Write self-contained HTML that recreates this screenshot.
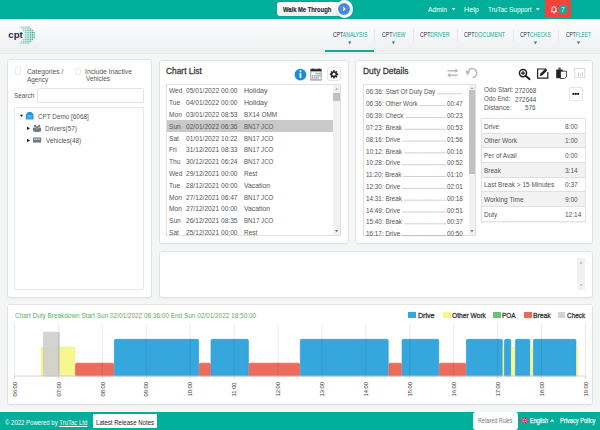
<!DOCTYPE html><html><head><meta charset="utf-8"><style>
html,body{margin:0;padding:0;width:600px;height:430px;overflow:hidden;position:relative;font-family:"Liberation Sans", sans-serif}
.t{position:absolute;white-space:nowrap;line-height:1}
svg{overflow:visible}
</style></head><body>
<div style="position:absolute;left:0.00px;top:0.00px;width:600.00px;height:19.00px;background:#00af9a"></div>
<div style="position:absolute;left:277.00px;top:2.00px;width:63.00px;height:14.30px;background:linear-gradient(#fff,#ededed);border-radius:3px;box-shadow:0 0 1px rgba(0,0,0,.3)"></div>
<div class="t" style="left:283.00px;top:6.50px;font-size:6.6px;color:#2a2a2a;font-weight:bold;transform:scaleX(0.8837);transform-origin:0 0;-webkit-text-stroke:.15px #2a2a2a">Walk Me Through</div>
<div style="position:absolute;left:335.5px;top:0.15px;width:17.5px;height:17.5px;border-radius:50%;background:#fdfdfd;box-shadow:0 0 1px rgba(0,0,0,.25)"></div>
<div style="position:absolute;left:337.9px;top:2.9px;width:12px;height:12px;border-radius:50%;background:#4a8bd9"></div>
<svg style="position:absolute;left:0;top:0" width="600" height="20"><path d="M343 7.3 L344.9 8.9 L343 10.5" stroke="#fff" stroke-width="1.2" fill="none"/></svg>
<div class="t" style="left:428.30px;top:5.65px;font-size:7.3px;color:#fff;font-weight:normal;transform:scaleX(0.9215);transform-origin:0 0;">Admin</div>
<svg style="position:absolute;left:0;top:0" width="600" height="20"><path d="M451.8 8 L455.4 8 L453.6 10.5Z" fill="#fff"/><path d="M536 8 L539.6 8 L537.8 10.5Z" fill="#fff"/></svg>
<div class="t" style="left:464.12px;top:5.65px;font-size:7.3px;color:#fff;font-weight:normal;transform:scaleX(0.9886);transform-origin:0 0;">Help</div>
<div class="t" style="left:488.17px;top:5.65px;font-size:7.3px;color:#fff;font-weight:normal;transform:scaleX(0.8769);transform-origin:0 0;">TruTac Support</div>
<div style="position:absolute;left:544.60px;top:0.00px;width:26.90px;height:18.30px;background:#f2443b"></div>
<svg style="position:absolute;left:0;top:0" width="600" height="20"><path d="M551 11.6 h6 M551.9 11.4 v-2.6 a2.1 2.1 0 0 1 4.2 0 v2.6" stroke="#fff" stroke-width="1" fill="none"/><circle cx="554" cy="12.7" r=".85" fill="#fff"/><circle cx="554" cy="6.3" r=".5" fill="#fff"/></svg>
<div style="position:absolute;left:559.20px;top:5.00px;width:7.80px;height:8.70px;background:#14ab98;border-radius:1.5px"></div>
<div class="t" style="left:561.30px;top:6.52px;font-size:7.15px;color:#e8f7f4;font-weight:normal;transform:scaleX(0.9091);transform-origin:0 0;">7</div>
<div style="position:absolute;left:0.00px;top:19.00px;width:600.00px;height:33.50px;background:linear-gradient(#fdfdfd,#eef0f1)"></div>
<div style="position:absolute;left:0.00px;top:52.50px;width:600.00px;height:1.00px;background:#e9ebeb"></div>
<svg style="position:absolute;left:0;top:0" width="60" height="53"><rect x="19.46" y="26.60" width="1.2" height="1.2" fill="#22a995" opacity="0.40"/><rect x="19.46" y="42.44" width="1.2" height="1.2" fill="#22a995" opacity="0.40"/><rect x="21.22" y="26.60" width="1.2" height="1.2" fill="#22a995" opacity="0.48"/><rect x="21.22" y="28.36" width="1.2" height="1.2" fill="#22a995" opacity="0.48"/><rect x="21.22" y="40.68" width="1.2" height="1.2" fill="#22a995" opacity="0.48"/><rect x="21.22" y="42.44" width="1.2" height="1.2" fill="#22a995" opacity="0.48"/><rect x="22.98" y="26.60" width="1.2" height="1.2" fill="#22a995" opacity="0.56"/><rect x="22.98" y="28.36" width="1.2" height="1.2" fill="#22a995" opacity="0.56"/><rect x="22.98" y="30.12" width="1.2" height="1.2" fill="#22a995" opacity="0.56"/><rect x="22.98" y="38.92" width="1.2" height="1.2" fill="#22a995" opacity="0.56"/><rect x="22.98" y="40.68" width="1.2" height="1.2" fill="#22a995" opacity="0.56"/><rect x="22.98" y="42.44" width="1.2" height="1.2" fill="#22a995" opacity="0.56"/><rect x="24.74" y="26.60" width="1.2" height="1.2" fill="#22a995" opacity="0.64"/><rect x="24.74" y="28.36" width="1.2" height="1.2" fill="#22a995" opacity="0.64"/><rect x="24.74" y="30.12" width="1.2" height="1.2" fill="#22a995" opacity="0.64"/><rect x="24.74" y="31.88" width="1.2" height="1.2" fill="#22a995" opacity="0.64"/><rect x="24.74" y="33.64" width="1.2" height="1.2" fill="#22a995" opacity="0.64"/><rect x="24.74" y="35.40" width="1.2" height="1.2" fill="#22a995" opacity="0.64"/><rect x="24.74" y="37.16" width="1.2" height="1.2" fill="#22a995" opacity="0.64"/><rect x="24.74" y="38.92" width="1.2" height="1.2" fill="#22a995" opacity="0.64"/><rect x="24.74" y="40.68" width="1.2" height="1.2" fill="#22a995" opacity="0.64"/><rect x="24.74" y="42.44" width="1.2" height="1.2" fill="#22a995" opacity="0.64"/><rect x="26.50" y="26.60" width="1.2" height="1.2" fill="#22a995" opacity="0.72"/><rect x="26.50" y="28.36" width="1.2" height="1.2" fill="#22a995" opacity="0.72"/><rect x="26.50" y="30.12" width="1.2" height="1.2" fill="#22a995" opacity="0.72"/><rect x="26.50" y="31.88" width="1.2" height="1.2" fill="#22a995" opacity="0.72"/><rect x="26.50" y="33.64" width="1.2" height="1.2" fill="#22a995" opacity="0.72"/><rect x="26.50" y="35.40" width="1.2" height="1.2" fill="#22a995" opacity="0.72"/><rect x="26.50" y="37.16" width="1.2" height="1.2" fill="#22a995" opacity="0.72"/><rect x="26.50" y="38.92" width="1.2" height="1.2" fill="#22a995" opacity="0.72"/><rect x="26.50" y="40.68" width="1.2" height="1.2" fill="#22a995" opacity="0.72"/><rect x="26.50" y="42.44" width="1.2" height="1.2" fill="#22a995" opacity="0.72"/><rect x="28.26" y="26.60" width="1.2" height="1.2" fill="#22a995" opacity="0.81"/><rect x="28.26" y="28.36" width="1.2" height="1.2" fill="#22a995" opacity="0.81"/><rect x="28.26" y="30.12" width="1.2" height="1.2" fill="#22a995" opacity="0.81"/><rect x="28.26" y="31.88" width="1.2" height="1.2" fill="#22a995" opacity="0.81"/><rect x="28.26" y="33.64" width="1.2" height="1.2" fill="#22a995" opacity="0.81"/><rect x="28.26" y="35.40" width="1.2" height="1.2" fill="#22a995" opacity="0.81"/><rect x="28.26" y="37.16" width="1.2" height="1.2" fill="#22a995" opacity="0.81"/><rect x="28.26" y="38.92" width="1.2" height="1.2" fill="#22a995" opacity="0.81"/><rect x="28.26" y="40.68" width="1.2" height="1.2" fill="#22a995" opacity="0.81"/><rect x="28.26" y="42.44" width="1.2" height="1.2" fill="#22a995" opacity="0.81"/><rect x="30.02" y="28.36" width="1.2" height="1.2" fill="#22a995" opacity="0.89"/><rect x="30.02" y="30.12" width="1.2" height="1.2" fill="#22a995" opacity="0.89"/><rect x="30.02" y="31.88" width="1.2" height="1.2" fill="#22a995" opacity="0.89"/><rect x="30.02" y="33.64" width="1.2" height="1.2" fill="#22a995" opacity="0.89"/><rect x="30.02" y="35.40" width="1.2" height="1.2" fill="#22a995" opacity="0.89"/><rect x="30.02" y="37.16" width="1.2" height="1.2" fill="#22a995" opacity="0.89"/><rect x="30.02" y="38.92" width="1.2" height="1.2" fill="#22a995" opacity="0.89"/><rect x="30.02" y="40.68" width="1.2" height="1.2" fill="#22a995" opacity="0.89"/><rect x="31.78" y="30.12" width="1.2" height="1.2" fill="#22a995" opacity="0.97"/><rect x="31.78" y="31.88" width="1.2" height="1.2" fill="#22a995" opacity="0.97"/><rect x="31.78" y="33.64" width="1.2" height="1.2" fill="#22a995" opacity="0.97"/><rect x="31.78" y="35.40" width="1.2" height="1.2" fill="#22a995" opacity="0.97"/><rect x="31.78" y="37.16" width="1.2" height="1.2" fill="#22a995" opacity="0.97"/><rect x="31.78" y="38.92" width="1.2" height="1.2" fill="#22a995" opacity="0.97"/><rect x="33.54" y="31.88" width="1.2" height="1.2" fill="#22a995" opacity="1.00"/><rect x="33.54" y="33.64" width="1.2" height="1.2" fill="#22a995" opacity="1.00"/><rect x="33.54" y="35.40" width="1.2" height="1.2" fill="#22a995" opacity="1.00"/><rect x="33.54" y="37.16" width="1.2" height="1.2" fill="#22a995" opacity="1.00"/>
<text x="8.3" y="37.7" font-family="Liberation Sans" font-weight="bold" font-size="9.6" fill="#2b2650" letter-spacing="0">cpt</text>
</svg>
<div class="t" style="left:332.55px;top:31.65px;font-size:6.3px;color:#17a99a;font-weight:normal;transform:scaleX(0.8080);transform-origin:0 0;"><span style="color:#2e2d4d">CPT</span>ANALYSIS</div>
<svg style="position:absolute;left:0;top:0" width="600" height="50"><path d="M348.1 41.6 L351.4 41.6 L349.8 44.2Z" fill="#1b7ed0"/></svg>
<div class="t" style="left:381.54px;top:31.65px;font-size:6.3px;color:#17a99a;font-weight:normal;transform:scaleX(0.8183);transform-origin:0 0;"><span style="color:#2e2d4d">CPT</span>VIEW</div>
<svg style="position:absolute;left:0;top:0" width="600" height="50"><path d="M391.7 41.6 L395.1 41.6 L393.4 44.2Z" fill="#1b7ed0"/></svg>
<div class="t" style="left:420.04px;top:31.65px;font-size:6.3px;color:#17a99a;font-weight:normal;transform:scaleX(0.8146);transform-origin:0 0;"><span style="color:#2e2d4d">CPT</span>DRIVER</div>
<div class="t" style="left:463.94px;top:31.65px;font-size:6.3px;color:#17a99a;font-weight:normal;transform:scaleX(0.8359);transform-origin:0 0;"><span style="color:#2e2d4d">CPT</span>DOCUMENT</div>
<div class="t" style="left:519.95px;top:31.65px;font-size:6.3px;color:#17a99a;font-weight:normal;transform:scaleX(0.7910);transform-origin:0 0;"><span style="color:#2e2d4d">CPT</span>CHECKS</div>
<svg style="position:absolute;left:0;top:0" width="600" height="50"><path d="M533.6 41.6 L537.1 41.6 L535.4 44.2Z" fill="#1b7ed0"/></svg>
<div class="t" style="left:565.96px;top:31.65px;font-size:6.3px;color:#17a99a;font-weight:normal;transform:scaleX(0.7716);transform-origin:0 0;"><span style="color:#2e2d4d">CPT</span>FLEET</div>
<svg style="position:absolute;left:0;top:0" width="600" height="50"><path d="M576.8 41.6 L580.2 41.6 L578.5 44.2Z" fill="#1b7ed0"/></svg>
<div style="position:absolute;left:374.00px;top:29.00px;width:0.80px;height:13.00px;background:#e9ebeb"></div>
<div style="position:absolute;left:413.30px;top:29.00px;width:0.80px;height:13.00px;background:#e9ebeb"></div>
<div style="position:absolute;left:457.00px;top:29.00px;width:0.80px;height:13.00px;background:#e9ebeb"></div>
<div style="position:absolute;left:513.20px;top:29.00px;width:0.80px;height:13.00px;background:#e9ebeb"></div>
<div style="position:absolute;left:558.00px;top:29.00px;width:0.80px;height:13.00px;background:#e9ebeb"></div>
<div style="position:absolute;left:325.00px;top:50.30px;width:49.00px;height:1.50px;background:#17a99a"></div>
<style>body{background:#f4f6f5}</style>
<div style="position:absolute;left:7.00px;top:59.00px;width:145.00px;height:238.50px;background:#fff;border:1px solid #e2e3e3;border-radius:3px;box-sizing:border-box;box-shadow:0 1px 1px rgba(0,0,0,.03)"></div>
<div style="position:absolute;left:14.60px;top:67.40px;width:6.00px;height:7.40px;border:1px solid #ebebeb;border-radius:1px;box-sizing:border-box;background:#fff"></div>
<div class="t" style="left:26.86px;top:68.29px;font-size:7.42px;color:#555;font-weight:normal;transform:scaleX(0.9091);transform-origin:0 0;">Categories /</div>
<div class="t" style="left:27.20px;top:75.90px;font-size:7.01px;color:#555;font-weight:normal;transform:scaleX(0.9091);transform-origin:0 0;">Agency</div>
<div style="position:absolute;left:75.00px;top:67.50px;width:5.70px;height:7.20px;border:1px solid #ebebeb;border-radius:1px;box-sizing:border-box;background:#fff"></div>
<div class="t" style="left:85.19px;top:68.08px;font-size:7.45px;color:#555;font-weight:normal;transform:scaleX(0.9091);transform-origin:0 0;">Include Inactive</div>
<div class="t" style="left:85.80px;top:75.47px;font-size:7.07px;color:#555;font-weight:normal;transform:scaleX(0.9091);transform-origin:0 0;">Vehicles</div>
<div class="t" style="left:14.34px;top:91.89px;font-size:7.02px;color:#555;font-weight:normal;transform:scaleX(0.9091);transform-origin:0 0;">Search</div>
<div style="position:absolute;left:37.00px;top:88.00px;width:107.00px;height:14.50px;border:1px solid #e2e2e2;border-radius:2px;box-sizing:border-box;background:#fff"></div>
<div style="position:absolute;left:14.00px;top:107.00px;width:130.00px;height:183.00px;border:1px solid #e8e8e8;border-radius:2px;box-sizing:border-box;background:#fff"></div>
<svg style="position:absolute;left:0;top:0" width="160" height="160">
<path d="M19.8 114.8 L23.2 114.8 L21.5 117.1Z" fill="#222"/>
<path d="M27 126.7 L30.1 128.35 L27 130Z" fill="#222"/>
<path d="M27 138.8 L30.1 140.5 L27 142.2Z" fill="#222"/>
<path d="M25.9 119.4 V114.6 L28.1 112.1 H31.3 L33.5 114.6 V119.4Z" fill="#1f95de"/>
<g stroke="#8ccbf2" stroke-width=".55"><path d="M27.1 115.4 H32.3 M27.1 116.7 H32.3 M27.1 118 H32.3"/></g>
<g fill="#6b7a84"><circle cx="35" cy="126" r="1.15"/><circle cx="39.2" cy="126" r="1.15"/><circle cx="37.1" cy="127.3" r="1.3"/>
<path d="M33 131.5 V128.6 Q33 127.6 34 127.6 H35.6 L36 128.4 H38.2 L38.6 127.6 H40.2 Q41.2 127.6 41.2 128.6 V131.5Z"/>
<rect x="34.9" y="128.8" width="4.4" height="3.1" rx=".6"/></g>
<rect x="33" y="137.6" width="8.2" height="4.8" rx=".7" fill="#6b7a84"/>
<g fill="#cfd8de"><rect x="34" y="138.5" width="1.5" height="1.5"/><rect x="36.1" y="138.5" width="1.5" height="1.5"/><rect x="38.2" y="138.5" width="1.5" height="1.5"/></g>
<rect x="33.3" y="142.4" width="7.6" height=".6" fill="#9aa5ac"/>
</svg>
<div class="t" style="left:37.68px;top:113.20px;font-size:6.99px;color:#555;font-weight:normal;transform:scaleX(0.9091);transform-origin:0 0;">CPT Demo [6068]</div>
<div class="t" style="left:45.28px;top:125.73px;font-size:7.14px;color:#555;font-weight:normal;transform:scaleX(0.9091);transform-origin:0 0;">Drivers(57)</div>
<div class="t" style="left:45.80px;top:137.47px;font-size:7.06px;color:#555;font-weight:normal;transform:scaleX(0.9091);transform-origin:0 0;">Vehicles(48)</div>
<div style="position:absolute;left:159.00px;top:60.00px;width:190.00px;height:184.00px;background:#fff;border:1px solid #e2e3e3;border-radius:3px;box-sizing:border-box;box-shadow:0 1px 1px rgba(0,0,0,.03)"></div>
<div class="t" style="left:166.28px;top:67.49px;font-size:9.21px;color:#3a3a3a;font-weight:normal;transform:scaleX(0.9091);transform-origin:0 0;-webkit-text-stroke:.3px #3a3a3a">Chart List</div>
<svg style="position:absolute;left:0;top:0" width="600" height="100">
<circle cx="300.45" cy="74.55" r="5.9" fill="#1a8cd8"/>
<circle cx="300.45" cy="71.3" r="0.95" fill="#fff"/>
<rect x="299.6" y="73.1" width="1.7" height="5" rx=".4" fill="#fff"/>
<rect x="310.8" y="69" width="10.4" height="11" fill="#fff" stroke="#8a8a8a" stroke-width=".8"/>
<rect x="310.6" y="69.2" width="10.8" height="2.3" fill="#1e1e1e"/>
<rect x="312.2" y="68.6" width="1.2" height="1" fill="#1e1e1e"/><rect x="318.6" y="68.6" width="1.2" height="1" fill="#1e1e1e"/>
<rect x="310.8" y="71.5" width="10.4" height=".9" fill="#cfcfcf"/>
<rect x="315.5" y="72.9" width="1.3" height="1.6" fill="#8fa3b8"/><rect x="317.4" y="72.9" width="1.3" height="1.6" fill="#b59d8f"/><rect x="319.3" y="72.9" width="1.3" height="1.6" fill="#7f93a8"/><rect x="311.7" y="75.0" width="1.3" height="1.6" fill="#c7a08a"/><rect x="313.6" y="75.0" width="1.3" height="1.6" fill="#8fa3b8"/><rect x="315.5" y="75.0" width="1.3" height="1.6" fill="#b59d8f"/><rect x="317.4" y="75.0" width="1.3" height="1.6" fill="#7f93a8"/><rect x="319.3" y="75.0" width="1.3" height="1.6" fill="#8a9fb5"/><rect x="311.7" y="77.1" width="1.3" height="1.6" fill="#8fa3b8"/><rect x="313.6" y="77.1" width="1.3" height="1.6" fill="#b59d8f"/><rect x="315.5" y="77.1" width="1.3" height="1.6" fill="#7f93a8"/><rect x="317.4" y="77.1" width="1.3" height="1.6" fill="#8a9fb5"/>
<rect x="310.8" y="79.2" width="10.4" height="1.1" fill="#b0b0b0"/>
</svg>
<div style="position:absolute;left:327.20px;top:67.20px;width:13.70px;height:14.20px;border:1px solid #e6e6e6;border-radius:2.5px;box-sizing:border-box;background:#fff;box-shadow:0 0 1px rgba(0,0,0,.08)"></div>
<svg style="position:absolute;left:0;top:0" width="600" height="100"><polygon points="336.87,73.60 338.04,73.61 338.04,74.99 336.87,75.00 336.52,75.83 337.35,76.67 336.37,77.65 335.53,76.82 334.70,77.17 334.69,78.34 333.31,78.34 333.30,77.17 332.47,76.82 331.63,77.65 330.65,76.67 331.48,75.83 331.13,75.00 329.96,74.99 329.96,73.61 331.13,73.60 331.48,72.77 330.65,71.93 331.63,70.95 332.47,71.78 333.30,71.43 333.31,70.26 334.69,70.26 334.70,71.43 335.53,71.78 336.37,70.95 337.35,71.93 336.52,72.77" fill="#222" stroke="#222" stroke-width=".3" stroke-linejoin="round"/><circle cx="334" cy="74.3" r="1.45" fill="#fff"/></svg>
<div style="position:absolute;left:166.00px;top:84.00px;width:175.00px;height:152.00px;border:1px solid #e0e0e0;box-sizing:border-box;background:#fff"></div>
<div style="position:absolute;left:332.90px;top:85.00px;width:7.10px;height:150.00px;background:#f1f1f1"></div>
<div style="position:absolute;left:333.20px;top:92.60px;width:6.40px;height:8.40px;background:#c1c1c1"></div>
<svg style="position:absolute;left:0;top:0" width="600" height="250"><path d="M335 89.7 L338.2 89.7 L336.6 88Z" fill="#a3a3a3"/><path d="M335 230.3 L338.2 230.3 L336.6 232Z" fill="#505050"/></svg>
<div style="position:absolute;left:167.00px;top:119.90px;width:165.50px;height:11.70px;background:#c9c9c9"></div>
<div style="position:absolute;left:167px;top:85px;width:166px;height:150px;overflow:hidden">
<div class="t" style="left:2.25px;top:2.27px;font-size:7.26px;color:#555;font-weight:normal;transform:scaleX(0.9091);transform-origin:0 0;">Wed</div>
<div class="t" style="left:18.60px;top:2.26px;font-size:7.29px;color:#555;font-weight:normal;transform:scaleX(0.9091);transform-origin:0 0;">05/01/2022 00:00</div>
<div class="t" style="left:77.20px;top:2.27px;font-size:7.26px;color:#555;font-weight:normal;transform:scaleX(0.9748);transform-origin:0 0;">Holiday</div>
<div class="t" style="left:2.25px;top:14.09px;font-size:7.26px;color:#555;font-weight:normal;transform:scaleX(0.9091);transform-origin:0 0;">Tue</div>
<div class="t" style="left:18.60px;top:14.08px;font-size:7.29px;color:#555;font-weight:normal;transform:scaleX(0.9091);transform-origin:0 0;">04/01/2022 00:00</div>
<div class="t" style="left:77.20px;top:14.09px;font-size:7.26px;color:#555;font-weight:normal;transform:scaleX(0.9748);transform-origin:0 0;">Holiday</div>
<div class="t" style="left:2.25px;top:25.91px;font-size:7.26px;color:#555;font-weight:normal;transform:scaleX(0.9091);transform-origin:0 0;">Mon</div>
<div class="t" style="left:18.60px;top:25.90px;font-size:7.29px;color:#555;font-weight:normal;transform:scaleX(0.9091);transform-origin:0 0;">03/01/2022 08:53</div>
<div class="t" style="left:77.20px;top:25.91px;font-size:7.26px;color:#555;font-weight:normal;transform:scaleX(0.8825);transform-origin:0 0;">BX14 OMM</div>
<div class="t" style="left:2.25px;top:37.73px;font-size:7.26px;color:#555;font-weight:normal;transform:scaleX(0.9091);transform-origin:0 0;">Sun</div>
<div class="t" style="left:18.60px;top:37.72px;font-size:7.29px;color:#555;font-weight:normal;transform:scaleX(0.9091);transform-origin:0 0;">02/01/2022 06:36</div>
<div class="t" style="left:77.20px;top:37.73px;font-size:7.26px;color:#555;font-weight:normal;transform:scaleX(0.8472);transform-origin:0 0;">BN17 JCO</div>
<div class="t" style="left:2.25px;top:49.55px;font-size:7.26px;color:#555;font-weight:normal;transform:scaleX(0.9091);transform-origin:0 0;">Sat</div>
<div class="t" style="left:18.60px;top:49.53px;font-size:7.29px;color:#555;font-weight:normal;transform:scaleX(0.9091);transform-origin:0 0;">01/01/2022 10:22</div>
<div class="t" style="left:77.20px;top:49.55px;font-size:7.26px;color:#555;font-weight:normal;transform:scaleX(0.8472);transform-origin:0 0;">BN17 JCO</div>
<div class="t" style="left:2.25px;top:61.37px;font-size:7.26px;color:#555;font-weight:normal;transform:scaleX(0.9091);transform-origin:0 0;">Fri</div>
<div class="t" style="left:18.60px;top:61.35px;font-size:7.29px;color:#555;font-weight:normal;transform:scaleX(0.9091);transform-origin:0 0;">31/12/2021 08:33</div>
<div class="t" style="left:77.20px;top:61.37px;font-size:7.26px;color:#555;font-weight:normal;transform:scaleX(0.8472);transform-origin:0 0;">BN17 JCO</div>
<div class="t" style="left:2.25px;top:73.19px;font-size:7.26px;color:#555;font-weight:normal;transform:scaleX(0.9091);transform-origin:0 0;">Thu</div>
<div class="t" style="left:18.60px;top:73.17px;font-size:7.29px;color:#555;font-weight:normal;transform:scaleX(0.9091);transform-origin:0 0;">30/12/2021 06:24</div>
<div class="t" style="left:77.20px;top:73.19px;font-size:7.26px;color:#555;font-weight:normal;transform:scaleX(0.8472);transform-origin:0 0;">BN17 JCO</div>
<div class="t" style="left:2.25px;top:85.01px;font-size:7.26px;color:#555;font-weight:normal;transform:scaleX(0.9091);transform-origin:0 0;">Wed</div>
<div class="t" style="left:18.60px;top:85.00px;font-size:7.29px;color:#555;font-weight:normal;transform:scaleX(0.9091);transform-origin:0 0;">29/12/2021 00:00</div>
<div class="t" style="left:77.20px;top:85.01px;font-size:7.26px;color:#555;font-weight:normal;transform:scaleX(0.8835);transform-origin:0 0;">Rest</div>
<div class="t" style="left:2.25px;top:96.83px;font-size:7.26px;color:#555;font-weight:normal;transform:scaleX(0.9091);transform-origin:0 0;">Tue</div>
<div class="t" style="left:18.60px;top:96.81px;font-size:7.29px;color:#555;font-weight:normal;transform:scaleX(0.9091);transform-origin:0 0;">28/12/2021 00:00</div>
<div class="t" style="left:77.20px;top:96.83px;font-size:7.26px;color:#555;font-weight:normal;transform:scaleX(0.9415);transform-origin:0 0;">Vacation</div>
<div class="t" style="left:2.25px;top:108.65px;font-size:7.26px;color:#555;font-weight:normal;transform:scaleX(0.9091);transform-origin:0 0;">Mon</div>
<div class="t" style="left:18.60px;top:108.63px;font-size:7.29px;color:#555;font-weight:normal;transform:scaleX(0.9091);transform-origin:0 0;">27/12/2021 06:47</div>
<div class="t" style="left:77.20px;top:108.65px;font-size:7.26px;color:#555;font-weight:normal;transform:scaleX(0.8472);transform-origin:0 0;">BN17 JCO</div>
<div class="t" style="left:2.25px;top:120.47px;font-size:7.26px;color:#555;font-weight:normal;transform:scaleX(0.9091);transform-origin:0 0;">Mon</div>
<div class="t" style="left:18.60px;top:120.46px;font-size:7.29px;color:#555;font-weight:normal;transform:scaleX(0.9091);transform-origin:0 0;">27/12/2021 00:00</div>
<div class="t" style="left:77.20px;top:120.47px;font-size:7.26px;color:#555;font-weight:normal;transform:scaleX(0.9415);transform-origin:0 0;">Vacation</div>
<div class="t" style="left:2.25px;top:132.29px;font-size:7.26px;color:#555;font-weight:normal;transform:scaleX(0.9091);transform-origin:0 0;">Sun</div>
<div class="t" style="left:18.60px;top:132.28px;font-size:7.29px;color:#555;font-weight:normal;transform:scaleX(0.9091);transform-origin:0 0;">26/12/2021 08:35</div>
<div class="t" style="left:77.20px;top:132.29px;font-size:7.26px;color:#555;font-weight:normal;transform:scaleX(0.8472);transform-origin:0 0;">BN17 JCO</div>
<div class="t" style="left:2.25px;top:144.11px;font-size:7.26px;color:#555;font-weight:normal;transform:scaleX(0.9091);transform-origin:0 0;">Sat</div>
<div class="t" style="left:18.60px;top:144.09px;font-size:7.29px;color:#555;font-weight:normal;transform:scaleX(0.9091);transform-origin:0 0;">25/12/2021 00:00</div>
<div class="t" style="left:77.20px;top:144.11px;font-size:7.26px;color:#555;font-weight:normal;transform:scaleX(0.8835);transform-origin:0 0;">Rest</div>
</div>
<div style="position:absolute;left:355.00px;top:60.00px;width:238.00px;height:184.00px;background:#fff;border:1px solid #e2e3e3;border-radius:3px;box-sizing:border-box;box-shadow:0 1px 1px rgba(0,0,0,.03)"></div>
<div class="t" style="left:363.32px;top:67.45px;font-size:9.29px;color:#3a3a3a;font-weight:normal;transform:scaleX(0.9091);transform-origin:0 0;-webkit-text-stroke:.3px #3a3a3a">Duty Details</div>
<svg style="position:absolute;left:0;top:0" width="600" height="100">
<g stroke="#b8b8b8" stroke-width="1.4" fill="none"><path d="M447.5 70.8 H457"/><path d="M448 75.2 H457.6"/></g>
<path d="M455.3 68.6 L458.4 70.8 L455.3 73Z" fill="#b8b8b8"/><path d="M450.2 73 L447.1 75.2 L450.2 77.4Z" fill="#b8b8b8"/>
<path d="M468.4 70.6 A4.5 4.5 0 1 1 472.6 77.5" stroke="#b8b8b8" stroke-width="1.5" fill="none"/>
<path d="M465.6 70.6 L470.6 71.4 L467 75.4Z" fill="#b8b8b8"/>
<circle cx="523" cy="73.1" r="3.55" stroke="#1a1a1a" stroke-width="1.5" fill="none"/>
<path d="M525.6 75.8 L529.6 79.2" stroke="#1a1a1a" stroke-width="1.8" stroke-linecap="round"/>
<path d="M521 73.1 H525 M523 71.1 V75.1" stroke="#1a1a1a" stroke-width="1.1"/>
<path d="M546 69 H537.6 V78.2 H547.8 V72" stroke="#222" stroke-width="1.2" fill="none"/>
<path d="M539.8 76 L540.4 73.6 L545.6 68.4 L547.4 70.2 L542.2 75.4Z" fill="#222"/>
<rect x="556.2" y="69.5" width="6.5" height="8.8" rx=".8" fill="#222"/>
<rect x="558.3" y="67.6" width="2.4" height="2.2" fill="#555"/>
<path d="M560.5 71.2 H566.5 V76.6 L564.6 78.5 H560.5Z" fill="#fff" stroke="#222" stroke-width=".8"/>
<g stroke="#d3d3d3" stroke-width=".8" fill="none"><rect x="574.8" y="68.3" width="10" height="9.5"/></g>
<g fill="#d3d3d3"><rect x="578" y="72" width="1" height="4.5"/><rect x="580" y="73.5" width="1" height="3"/><rect x="582" y="71.5" width="1" height="5"/></g>
</svg>
<div style="position:absolute;left:363.00px;top:84.00px;width:113.00px;height:152.00px;border:1px solid #e0e0e0;box-sizing:border-box;background:#fff"></div>
<div style="position:absolute;left:468.60px;top:85.00px;width:6.70px;height:150.00px;background:#f1f1f1"></div>
<div style="position:absolute;left:469.20px;top:90.30px;width:5.80px;height:83.90px;background:#c1c1c1"></div>
<svg style="position:absolute;left:0;top:0" width="600" height="250"><path d="M470.4 89 L473.6 89 L472 87.3Z" fill="#a3a3a3"/><path d="M470.4 230.3 L473.6 230.3 L472 232Z" fill="#505050"/></svg>
<div style="position:absolute;left:364.4px;top:85px;width:104.6px;height:150.8px;overflow:hidden">
<div class="t" style="left:1.60px;top:3.41px;font-size:6.99px;color:#555;font-weight:normal;transform:scaleX(0.9091);transform-origin:0 0;">06:36: Start Of Duty Day</div>
<div class="t" style="left:1.60px;top:15.22px;font-size:6.99px;color:#555;font-weight:normal;transform:scaleX(0.9091);transform-origin:0 0;">06:36: Other Work</div>
<div class="t" style="left:83.00px;top:15.22px;font-size:6.99px;color:#555;font-weight:normal;transform:scaleX(0.9091);transform-origin:0 0;">00:47</div>
<div class="t" style="left:1.60px;top:27.05px;font-size:6.99px;color:#555;font-weight:normal;transform:scaleX(0.9091);transform-origin:0 0;">06:39: Check</div>
<div class="t" style="left:83.00px;top:27.05px;font-size:6.99px;color:#555;font-weight:normal;transform:scaleX(0.9091);transform-origin:0 0;">00:23</div>
<div class="t" style="left:1.60px;top:38.87px;font-size:6.99px;color:#555;font-weight:normal;transform:scaleX(0.9091);transform-origin:0 0;">07:23: Break</div>
<div class="t" style="left:83.00px;top:38.87px;font-size:6.99px;color:#555;font-weight:normal;transform:scaleX(0.9091);transform-origin:0 0;">00:53</div>
<div class="t" style="left:1.60px;top:50.69px;font-size:6.99px;color:#555;font-weight:normal;transform:scaleX(0.9091);transform-origin:0 0;">08:16: Drive</div>
<div class="t" style="left:83.00px;top:50.69px;font-size:6.99px;color:#555;font-weight:normal;transform:scaleX(0.9091);transform-origin:0 0;">01:56</div>
<div class="t" style="left:1.60px;top:62.50px;font-size:6.99px;color:#555;font-weight:normal;transform:scaleX(0.9091);transform-origin:0 0;">10:12: Break</div>
<div class="t" style="left:83.00px;top:62.50px;font-size:6.99px;color:#555;font-weight:normal;transform:scaleX(0.9091);transform-origin:0 0;">00:16</div>
<div class="t" style="left:1.60px;top:74.32px;font-size:6.99px;color:#555;font-weight:normal;transform:scaleX(0.9091);transform-origin:0 0;">10:28: Drive</div>
<div class="t" style="left:83.00px;top:74.32px;font-size:6.99px;color:#555;font-weight:normal;transform:scaleX(0.9091);transform-origin:0 0;">00:52</div>
<div class="t" style="left:1.60px;top:86.15px;font-size:6.99px;color:#555;font-weight:normal;transform:scaleX(0.9091);transform-origin:0 0;">11:20: Break</div>
<div class="t" style="left:83.00px;top:86.15px;font-size:6.99px;color:#555;font-weight:normal;transform:scaleX(0.9091);transform-origin:0 0;">01:10</div>
<div class="t" style="left:1.60px;top:97.97px;font-size:6.99px;color:#555;font-weight:normal;transform:scaleX(0.9091);transform-origin:0 0;">12:30: Drive</div>
<div class="t" style="left:83.00px;top:97.97px;font-size:6.99px;color:#555;font-weight:normal;transform:scaleX(0.9091);transform-origin:0 0;">02:01</div>
<div class="t" style="left:1.60px;top:109.78px;font-size:6.99px;color:#555;font-weight:normal;transform:scaleX(0.9091);transform-origin:0 0;">14:31: Break</div>
<div class="t" style="left:83.00px;top:109.78px;font-size:6.99px;color:#555;font-weight:normal;transform:scaleX(0.9091);transform-origin:0 0;">00:18</div>
<div class="t" style="left:1.60px;top:121.61px;font-size:6.99px;color:#555;font-weight:normal;transform:scaleX(0.9091);transform-origin:0 0;">14:49: Drive</div>
<div class="t" style="left:83.00px;top:121.61px;font-size:6.99px;color:#555;font-weight:normal;transform:scaleX(0.9091);transform-origin:0 0;">00:51</div>
<div class="t" style="left:1.60px;top:133.43px;font-size:6.99px;color:#555;font-weight:normal;transform:scaleX(0.9091);transform-origin:0 0;">15:40: Break</div>
<div class="t" style="left:83.00px;top:133.43px;font-size:6.99px;color:#555;font-weight:normal;transform:scaleX(0.9091);transform-origin:0 0;">00:37</div>
<div class="t" style="left:1.60px;top:145.25px;font-size:6.99px;color:#555;font-weight:normal;transform:scaleX(0.9091);transform-origin:0 0;">16:17: Drive</div>
<div class="t" style="left:83.00px;top:145.25px;font-size:6.99px;color:#555;font-weight:normal;transform:scaleX(0.9091);transform-origin:0 0;">00:50</div>
</div>
<svg style="position:absolute;left:0;top:0" width="600" height="250"><g stroke="#8a8a8a" stroke-width=".65" stroke-dasharray=".6 .35">
<path d="M437.36 93.80 H461.9"/>
<path d="M420.03 105.62 H446.3"/>
<path d="M405.67 117.44 H446.3"/>
<path d="M404.28 129.26 H446.3"/>
<path d="M402.25 141.08 H446.3"/>
<path d="M404.02 152.90 H446.3"/>
<path d="M401.99 164.72 H446.3"/>
<path d="M403.58 176.54 H446.3"/>
<path d="M401.99 188.36 H446.3"/>
<path d="M404.02 200.18 H446.3"/>
<path d="M401.99 212.00 H446.3"/>
<path d="M404.02 223.82 H446.3"/>
<path d="M401.99 235.64 H446.3"/>
</g></svg>
<div class="t" style="left:483.94px;top:87.36px;font-size:7.08px;color:#555;font-weight:normal;transform:scaleX(0.9091);transform-origin:0 0;">Odo Start:</div>
<div class="t" style="left:515.08px;top:86.88px;font-size:7.04px;color:#555;font-weight:normal;transform:scaleX(0.9091);transform-origin:0 0;">272068</div>
<div class="t" style="left:483.95px;top:95.89px;font-size:6.81px;color:#555;font-weight:normal;transform:scaleX(0.9091);transform-origin:0 0;">Odo End:</div>
<div class="t" style="left:515.08px;top:95.79px;font-size:7.02px;color:#555;font-weight:normal;transform:scaleX(0.9091);transform-origin:0 0;">272644</div>
<div class="t" style="left:483.67px;top:104.37px;font-size:7.26px;color:#555;font-weight:normal;transform:scaleX(0.9091);transform-origin:0 0;">Distance:</div>
<div class="t" style="left:525.17px;top:104.48px;font-size:7.04px;color:#555;font-weight:normal;transform:scaleX(0.9091);transform-origin:0 0;">576</div>
<div style="position:absolute;left:568.60px;top:86.60px;width:14.00px;height:14.00px;border:1px solid #e6e6e6;border-radius:2.5px;box-sizing:border-box;background:#fff;box-shadow:0 0 1px rgba(0,0,0,.08)"></div>
<svg style="position:absolute;left:0;top:0" width="600" height="250"><g fill="#1e1e1e"><circle cx="573.4" cy="93.9" r="1.15"/><circle cx="575.75" cy="93.9" r="1.15"/><circle cx="578.1" cy="93.9" r="1.15"/></g></svg>
<div style="position:absolute;left:481.00px;top:118.00px;width:104.50px;height:104.00px;border:1px solid #e3e3e3;box-sizing:border-box;background:#fff;box-shadow:0 1px 1px rgba(0,0,0,.05)"></div>
<div class="t" style="left:484.20px;top:123.62px;font-size:7.15px;color:#555;font-weight:normal;transform:scaleX(0.9091);transform-origin:0 0;">Drive</div>
<div class="t" style="left:565.00px;top:123.62px;font-size:7.15px;color:#555;font-weight:normal;transform:scaleX(0.9091);transform-origin:0 0;">8:00</div>
<div style="position:absolute;left:482.00px;top:133.27px;width:102.50px;height:14.67px;background:#f2f2f2"></div>
<div style="position:absolute;left:482.00px;top:132.77px;width:102.50px;height:1.00px;background:#e0e0e0"></div>
<div class="t" style="left:484.20px;top:138.29px;font-size:7.15px;color:#555;font-weight:normal;transform:scaleX(0.9091);transform-origin:0 0;">Other Work</div>
<div class="t" style="left:565.00px;top:138.29px;font-size:7.15px;color:#555;font-weight:normal;transform:scaleX(0.9091);transform-origin:0 0;">1:00</div>
<div style="position:absolute;left:482.00px;top:147.44px;width:102.50px;height:1.00px;background:#e0e0e0"></div>
<div class="t" style="left:484.20px;top:152.97px;font-size:7.15px;color:#555;font-weight:normal;transform:scaleX(0.9091);transform-origin:0 0;">Per of Avail</div>
<div class="t" style="left:565.00px;top:152.97px;font-size:7.15px;color:#555;font-weight:normal;transform:scaleX(0.9091);transform-origin:0 0;">0:00</div>
<div style="position:absolute;left:482.00px;top:162.61px;width:102.50px;height:14.67px;background:#f2f2f2"></div>
<div style="position:absolute;left:482.00px;top:162.11px;width:102.50px;height:1.00px;background:#e0e0e0"></div>
<div class="t" style="left:484.20px;top:167.63px;font-size:7.15px;color:#555;font-weight:normal;transform:scaleX(0.9091);transform-origin:0 0;">Break</div>
<div class="t" style="left:565.00px;top:167.63px;font-size:7.15px;color:#555;font-weight:normal;transform:scaleX(0.9091);transform-origin:0 0;">3:14</div>
<div style="position:absolute;left:482.00px;top:176.78px;width:102.50px;height:1.00px;background:#e0e0e0"></div>
<div class="t" style="left:484.20px;top:182.31px;font-size:7.15px;color:#555;font-weight:normal;transform:scaleX(0.9091);transform-origin:0 0;">Last Break &gt; 15 Minutes</div>
<div class="t" style="left:565.00px;top:182.31px;font-size:7.15px;color:#555;font-weight:normal;transform:scaleX(0.9091);transform-origin:0 0;">0:37</div>
<div style="position:absolute;left:482.00px;top:191.95px;width:102.50px;height:14.67px;background:#f2f2f2"></div>
<div style="position:absolute;left:482.00px;top:191.45px;width:102.50px;height:1.00px;background:#e0e0e0"></div>
<div class="t" style="left:484.20px;top:196.97px;font-size:7.15px;color:#555;font-weight:normal;transform:scaleX(0.9091);transform-origin:0 0;">Working Time</div>
<div class="t" style="left:565.00px;top:196.97px;font-size:7.15px;color:#555;font-weight:normal;transform:scaleX(0.9091);transform-origin:0 0;">9:00</div>
<div style="position:absolute;left:482.00px;top:206.12px;width:102.50px;height:1.00px;background:#e0e0e0"></div>
<div class="t" style="left:484.20px;top:211.65px;font-size:7.15px;color:#555;font-weight:normal;transform:scaleX(0.9091);transform-origin:0 0;">Duty</div>
<div class="t" style="left:565.00px;top:211.65px;font-size:7.15px;color:#555;font-weight:normal;transform:scaleX(0.9091);transform-origin:0 0;">12:14</div>
<div style="position:absolute;left:159.00px;top:250.80px;width:434.00px;height:46.80px;background:#fff;border:1px solid #e2e3e3;border-radius:3px;box-sizing:border-box;box-shadow:0 1px 1px rgba(0,0,0,.03)"></div>
<div style="position:absolute;left:577.30px;top:258.30px;width:7.80px;height:31.30px;background:#f1f1f1"></div>
<svg style="position:absolute;left:0;top:0" width="600" height="300"><path d="M579.5 263.4 L582.9 263.4 L581.2 261.6Z" fill="#b0b0b0"/><path d="M579.5 284.3 L582.9 284.3 L581.2 286.1Z" fill="#b0b0b0"/></svg>
<div style="position:absolute;left:7.00px;top:304.00px;width:586.00px;height:101.00px;background:#fff;border:1px solid #e2e3e3;border-radius:3px;box-sizing:border-box;box-shadow:0 1px 1px rgba(0,0,0,.03)"></div>
<div class="t" style="left:14.68px;top:312.30px;font-size:7.2px;color:#52b45a;font-weight:normal;transform:scaleX(0.8940);transform-origin:0 0;">Chart Duty Breakdown Start Sun 02/01/2022 06:36:00 End Sun 02/01/2022 18:50:00</div>
<div style="position:absolute;left:408.30px;top:312.00px;width:7.50px;height:6.00px;background:#35a7dc"></div>
<div class="t" style="left:417.73px;top:311.90px;font-size:7px;color:#3c3c3c;font-weight:normal;transform:scaleX(1.0103);transform-origin:0 0;-webkit-text-stroke:.3px #3c3c3c">Drive</div>
<div style="position:absolute;left:443.30px;top:312.00px;width:7.50px;height:6.00px;background:#f7f78e"></div>
<div class="t" style="left:452.03px;top:311.90px;font-size:7px;color:#3c3c3c;font-weight:normal;transform:scaleX(0.9514);transform-origin:0 0;-webkit-text-stroke:.3px #3c3c3c">Other Work</div>
<div style="position:absolute;left:493.30px;top:312.00px;width:7.50px;height:6.00px;background:#6cc27a"></div>
<div class="t" style="left:502.19px;top:311.90px;font-size:7px;color:#3c3c3c;font-weight:normal;transform:scaleX(0.9148);transform-origin:0 0;-webkit-text-stroke:.3px #3c3c3c">POA</div>
<div style="position:absolute;left:524.00px;top:312.00px;width:7.50px;height:6.00px;background:#ec6a5c"></div>
<div class="t" style="left:532.96px;top:311.90px;font-size:7px;color:#3c3c3c;font-weight:normal;transform:scaleX(0.9674);transform-origin:0 0;-webkit-text-stroke:.3px #3c3c3c">Break</div>
<div style="position:absolute;left:557.80px;top:312.00px;width:7.50px;height:6.00px;background:#d3d3d3"></div>
<div class="t" style="left:566.98px;top:311.90px;font-size:7px;color:#3c3c3c;font-weight:normal;transform:scaleX(0.9165);transform-origin:0 0;-webkit-text-stroke:.3px #3c3c3c">Check</div>
<svg style="position:absolute;left:0;top:0" width="600" height="430"><path d="M41.20 376 V348.45 Q41.20 347.15 42.50 347.15 H73.61 Q74.91 347.15 74.91 348.45 V376Z" fill="#f7f78e" stroke="#efef7c" stroke-width=".7" opacity="1"/><path d="M43.40 376 V333.45 Q43.40 332.15 44.70 332.15 H58.23 Q59.53 332.15 59.53 333.45 V376Z" fill="#d0d0d0" stroke="#c8c8c8" stroke-width=".7" opacity="0.9"/><path d="M75.61 376 V364.45 Q75.61 363.15 76.91 363.15 H112.40 Q113.70 363.15 113.70 364.45 V376Z" fill="#ec6b5d" stroke="#e05c4e" stroke-width=".7" opacity="1"/><path d="M114.40 376 V340.65 Q114.40 339.35 115.70 339.35 H197.31 Q198.61 339.35 198.61 340.65 V376Z" fill="#35a7dc" stroke="#2b9cd3" stroke-width=".7" opacity="1"/><path d="M199.31 376 V364.45 Q199.31 363.15 200.61 363.15 H209.03 Q210.33 363.15 210.33 364.45 V376Z" fill="#ec6b5d" stroke="#e05c4e" stroke-width=".7" opacity="1"/><path d="M211.03 376 V340.65 Q211.03 339.35 212.33 339.35 H247.09 Q248.39 339.35 248.39 340.65 V376Z" fill="#35a7dc" stroke="#2b9cd3" stroke-width=".7" opacity="1"/><path d="M249.09 376 V364.45 Q249.09 363.15 250.39 363.15 H298.33 Q299.63 363.15 299.63 364.45 V376Z" fill="#ec6b5d" stroke="#e05c4e" stroke-width=".7" opacity="1"/><path d="M300.33 376 V340.65 Q300.33 339.35 301.63 339.35 H386.90 Q388.20 339.35 388.20 340.65 V376Z" fill="#35a7dc" stroke="#2b9cd3" stroke-width=".7" opacity="1"/><path d="M388.90 376 V364.45 Q388.90 363.15 390.20 363.15 H400.08 Q401.38 363.15 401.38 364.45 V376Z" fill="#ec6b5d" stroke="#e05c4e" stroke-width=".7" opacity="1"/><path d="M402.08 376 V340.65 Q402.08 339.35 403.38 339.35 H437.41 Q438.71 339.35 438.71 340.65 V376Z" fill="#35a7dc" stroke="#2b9cd3" stroke-width=".7" opacity="1"/><path d="M439.41 376 V364.45 Q439.41 363.15 440.71 363.15 H464.49 Q465.79 363.15 465.79 364.45 V376Z" fill="#ec6b5d" stroke="#e05c4e" stroke-width=".7" opacity="1"/><path d="M466.49 376 V340.65 Q466.49 339.35 467.79 339.35 H501.09 Q502.39 339.35 502.39 340.65 V376Z" fill="#35a7dc" stroke="#2b9cd3" stroke-width=".7" opacity="1"/><path d="M503.09 376 V348.45 Q503.09 347.15 504.39 347.15 H502.56 Q503.86 347.15 503.86 348.45 V376Z" fill="#f7f78e" stroke="#efef7c" stroke-width=".7" opacity="1"/><path d="M504.56 376 V340.65 Q504.56 339.35 505.86 339.35 H509.51 Q510.81 339.35 510.81 340.65 V376Z" fill="#35a7dc" stroke="#2b9cd3" stroke-width=".7" opacity="1"/><path d="M511.51 376 V348.45 Q511.51 347.15 512.81 347.15 H513.54 Q514.84 347.15 514.84 348.45 V376Z" fill="#f7f78e" stroke="#efef7c" stroke-width=".7" opacity="1"/><path d="M515.54 376 V340.65 Q515.54 339.35 516.84 339.35 H528.54 Q529.84 339.35 529.84 340.65 V376Z" fill="#35a7dc" stroke="#2b9cd3" stroke-width=".7" opacity="1"/><path d="M530.54 376 V348.45 Q530.54 347.15 531.84 347.15 H531.47 Q532.77 347.15 532.77 348.45 V376Z" fill="#f7f78e" stroke="#efef7c" stroke-width=".7" opacity="1"/><path d="M533.47 376 V340.65 Q533.47 339.35 534.77 339.35 H574.66 Q575.96 339.35 575.96 340.65 V376Z" fill="#35a7dc" stroke="#2b9cd3" stroke-width=".7" opacity="1"/><path d="M576.66 376 V348.45 Q576.66 347.15 577.96 347.15 H576.49 Q577.79 347.15 577.79 348.45 V376Z" fill="#f7f78e" stroke="#efef7c" stroke-width=".7" opacity="1"/><path d="M14.50 323.5 V376" stroke="#000" stroke-opacity=".12" stroke-width=".7"/><path d="M14.50 376 V378.5" stroke="#bbb" stroke-width=".7"/><text transform="translate(16.70,396.5) rotate(-90)" font-family="Liberation Sans" font-size="5.8" fill="#333">06:00</text><path d="M58.42 323.5 V376" stroke="#000" stroke-opacity=".12" stroke-width=".7"/><path d="M58.42 376 V378.5" stroke="#bbb" stroke-width=".7"/><text transform="translate(60.62,396.5) rotate(-90)" font-family="Liberation Sans" font-size="5.8" fill="#333">07:00</text><path d="M102.34 323.5 V376" stroke="#000" stroke-opacity=".12" stroke-width=".7"/><path d="M102.34 376 V378.5" stroke="#bbb" stroke-width=".7"/><text transform="translate(104.54,396.5) rotate(-90)" font-family="Liberation Sans" font-size="5.8" fill="#333">08:00</text><path d="M146.26 323.5 V376" stroke="#000" stroke-opacity=".12" stroke-width=".7"/><path d="M146.26 376 V378.5" stroke="#bbb" stroke-width=".7"/><text transform="translate(148.46,396.5) rotate(-90)" font-family="Liberation Sans" font-size="5.8" fill="#333">09:00</text><path d="M190.18 323.5 V376" stroke="#000" stroke-opacity=".12" stroke-width=".7"/><path d="M190.18 376 V378.5" stroke="#bbb" stroke-width=".7"/><text transform="translate(192.38,396.5) rotate(-90)" font-family="Liberation Sans" font-size="5.8" fill="#333">10:00</text><path d="M234.10 323.5 V376" stroke="#000" stroke-opacity=".12" stroke-width=".7"/><path d="M234.10 376 V378.5" stroke="#bbb" stroke-width=".7"/><text transform="translate(236.30,396.5) rotate(-90)" font-family="Liberation Sans" font-size="5.8" fill="#333">11:00</text><path d="M278.02 323.5 V376" stroke="#000" stroke-opacity=".12" stroke-width=".7"/><path d="M278.02 376 V378.5" stroke="#bbb" stroke-width=".7"/><text transform="translate(280.22,396.5) rotate(-90)" font-family="Liberation Sans" font-size="5.8" fill="#333">12:00</text><path d="M321.94 323.5 V376" stroke="#000" stroke-opacity=".12" stroke-width=".7"/><path d="M321.94 376 V378.5" stroke="#bbb" stroke-width=".7"/><text transform="translate(324.14,396.5) rotate(-90)" font-family="Liberation Sans" font-size="5.8" fill="#333">13:00</text><path d="M365.86 323.5 V376" stroke="#000" stroke-opacity=".12" stroke-width=".7"/><path d="M365.86 376 V378.5" stroke="#bbb" stroke-width=".7"/><text transform="translate(368.06,396.5) rotate(-90)" font-family="Liberation Sans" font-size="5.8" fill="#333">14:00</text><path d="M409.78 323.5 V376" stroke="#000" stroke-opacity=".12" stroke-width=".7"/><path d="M409.78 376 V378.5" stroke="#bbb" stroke-width=".7"/><text transform="translate(411.98,396.5) rotate(-90)" font-family="Liberation Sans" font-size="5.8" fill="#333">15:00</text><path d="M453.70 323.5 V376" stroke="#000" stroke-opacity=".12" stroke-width=".7"/><path d="M453.70 376 V378.5" stroke="#bbb" stroke-width=".7"/><text transform="translate(455.90,396.5) rotate(-90)" font-family="Liberation Sans" font-size="5.8" fill="#333">16:00</text><path d="M497.62 323.5 V376" stroke="#000" stroke-opacity=".12" stroke-width=".7"/><path d="M497.62 376 V378.5" stroke="#bbb" stroke-width=".7"/><text transform="translate(499.82,396.5) rotate(-90)" font-family="Liberation Sans" font-size="5.8" fill="#333">17:00</text><path d="M541.54 323.5 V376" stroke="#000" stroke-opacity=".12" stroke-width=".7"/><path d="M541.54 376 V378.5" stroke="#bbb" stroke-width=".7"/><text transform="translate(543.74,396.5) rotate(-90)" font-family="Liberation Sans" font-size="5.8" fill="#333">18:00</text><path d="M585.46 323.5 V376" stroke="#000" stroke-opacity=".12" stroke-width=".7"/><path d="M585.46 376 V378.5" stroke="#bbb" stroke-width=".7"/><text transform="translate(587.66,396.5) rotate(-90)" font-family="Liberation Sans" font-size="5.8" fill="#333">19:00</text><path d="M14.5 376 H585.5" stroke="#ccc" stroke-width=".8"/></svg>
<div style="position:absolute;left:0.00px;top:411.70px;width:600.00px;height:18.30px;background:#00af9a"></div>
<div class="t" style="left:4.74px;top:418.70px;font-size:7px;color:#fff;font-weight:normal;transform:scaleX(0.8553);transform-origin:0 0;">© 2022 Powered by <u>TruTac Ltd</u></div>
<div style="position:absolute;left:92.80px;top:414.30px;width:64.50px;height:14.20px;background:#fff;border-radius:1px"></div>
<div class="t" style="left:96.01px;top:418.50px;font-size:7px;color:#222;font-weight:normal;transform:scaleX(0.8677);transform-origin:0 0;">Latest Release Notes</div>
<div style="position:absolute;left:472.80px;top:412.00px;width:45.50px;height:17.50px;background:#fff;border-radius:3px"></div>
<div class="t" style="left:478.28px;top:418.10px;font-size:6.8px;color:#777;font-weight:normal;transform:scaleX(0.7779);transform-origin:0 0;">Relaxed Rules</div>
<svg style="position:absolute;left:0;top:0" width="600" height="430">
<rect x="521.1" y="417.8" width="6.6" height="5.4" fill="#2b3c8f"/>
<path d="M521.1 417.8 L527.7 423.2 M527.7 417.8 L521.1 423.2" stroke="#ddd" stroke-width=".8"/>
<path d="M521.1 417.8 L527.7 423.2 M527.7 417.8 L521.1 423.2" stroke="#e23" stroke-width=".4"/>
<path d="M524.4 417.8 V423.2 M521.1 420.5 H527.7" stroke="#eee" stroke-width="1.3"/>
<path d="M524.4 417.8 V423.2 M521.1 420.5 H527.7" stroke="#d22" stroke-width=".8"/>
<path d="M550.3 421.8 L552.1 420 L553.9 421.8" stroke="#fff" stroke-width="1.1" fill="none"/>
</svg>
<div class="t" style="left:530.16px;top:417.30px;font-size:7.2px;color:#eefaf7;font-weight:normal;transform:scaleX(0.7652);transform-origin:0 0;-webkit-text-stroke:.25px #eefaf7">English</div>
<div class="t" style="left:560.15px;top:417.30px;font-size:7.2px;color:#eefaf7;font-weight:normal;transform:scaleX(0.7894);transform-origin:0 0;-webkit-text-stroke:.25px #eefaf7">Privacy Policy</div>
</body></html>
